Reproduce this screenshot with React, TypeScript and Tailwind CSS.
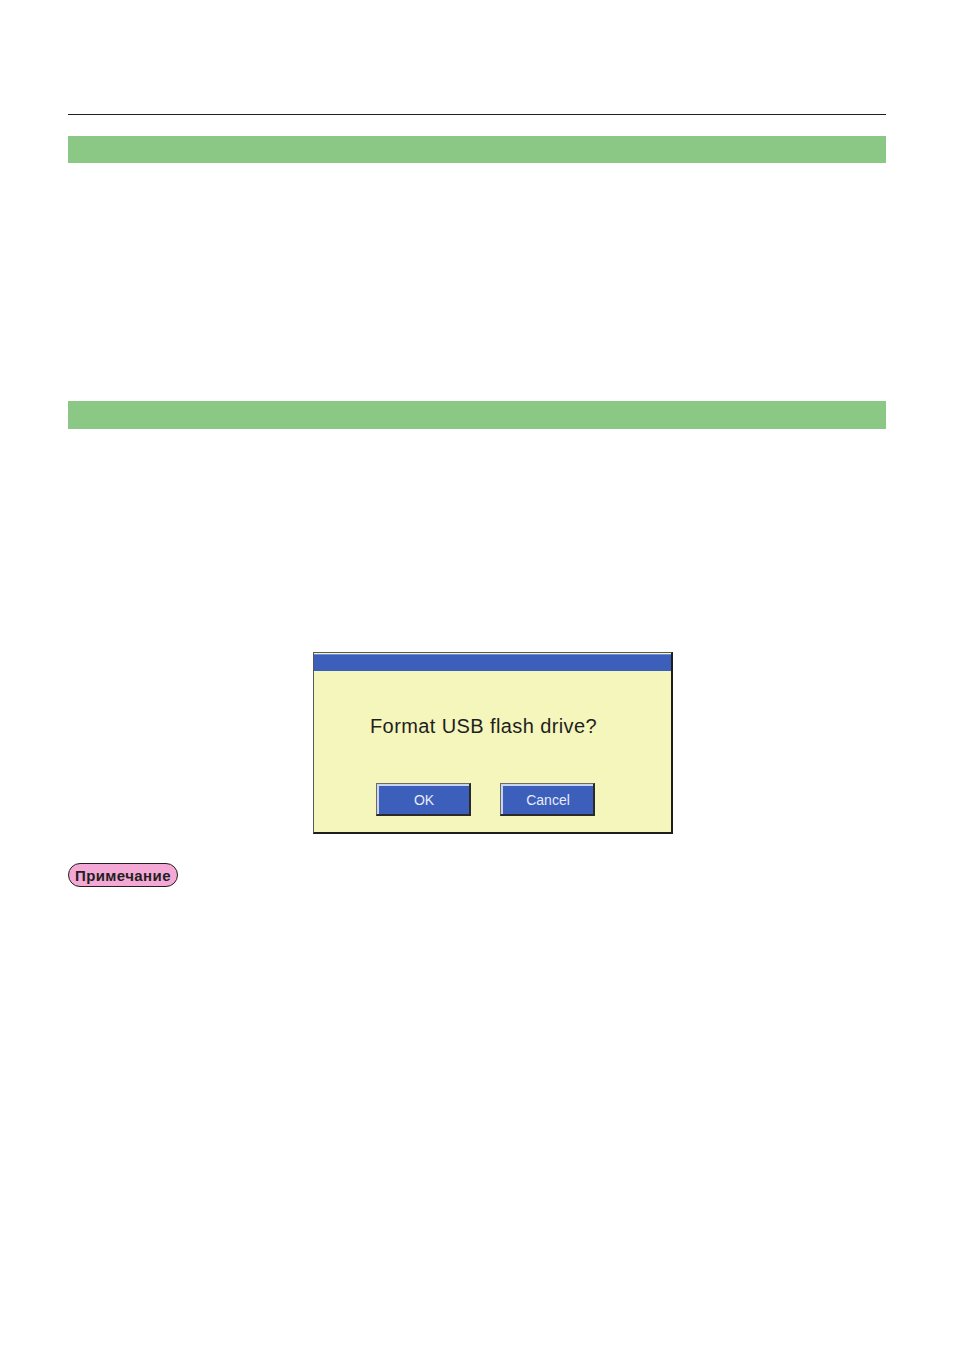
import React from 'react';

const DialogButton: React.FC<{ label: string }> = ({ label }) => (
  <div className="w-[95px] h-[33px] border-r-2 border-b-2 border-[#2a2a2a] border-l border-t border-l-[#6b6b6b] border-t-[#6b6b6b]">
    <div className="w-full h-full border-l-2 border-t-2 border-[#c9d4f0] bg-[#3b5fba] flex items-center justify-center">
      <span className="text-[#e8ecf8] text-[14px] leading-none">{label}</span>
    </div>
  </div>
);

const App: React.FC = () => {
  return (
    <div className="w-[954px] min-h-[1350px] bg-white px-[68px] pt-[114px]" style={{ fontFamily: '"Liberation Sans", Arial, sans-serif' }}>
      <div className="border-t border-[#231f20]" />

      <div className="mt-[21px] h-[27px] bg-[#8bc785]" />

      <div className="mt-[238px] h-[28px] bg-[#8bc785]" />

      <div className="mt-[223px] ml-[245px] w-[360px] h-[182px] border-l border-t border-[#55575a] border-r-2 border-b-2 border-r-[#1e1e1e] border-b-[#1e1e1e] bg-[#f4f6bb] flex flex-col">
        <div className="mt-[1px] h-[17px] bg-[#3b5fba] border-t border-[#6f8cd2]" />
        <div className="flex-1 flex flex-col">
          <div className="mt-[45px] pl-[56px] text-[20px] leading-none text-[#1f1f1f] tracking-[0.4px]">
            Format USB flash drive?
          </div>
          <div className="mt-[47px] pl-[62px] flex gap-[29px]">
            <DialogButton label="OK" />
            <DialogButton label="Cancel" />
          </div>
        </div>
      </div>

      <div className="mt-[29px]">
        <span className="inline-flex items-center h-[24px] px-[6px] rounded-full border border-[#231f20] bg-[#f4a8d6] text-[15px] font-bold text-[#231f20] leading-none tracking-[0.4px]">
          Примечание
        </span>
      </div>
    </div>
  );
};

export default App;
